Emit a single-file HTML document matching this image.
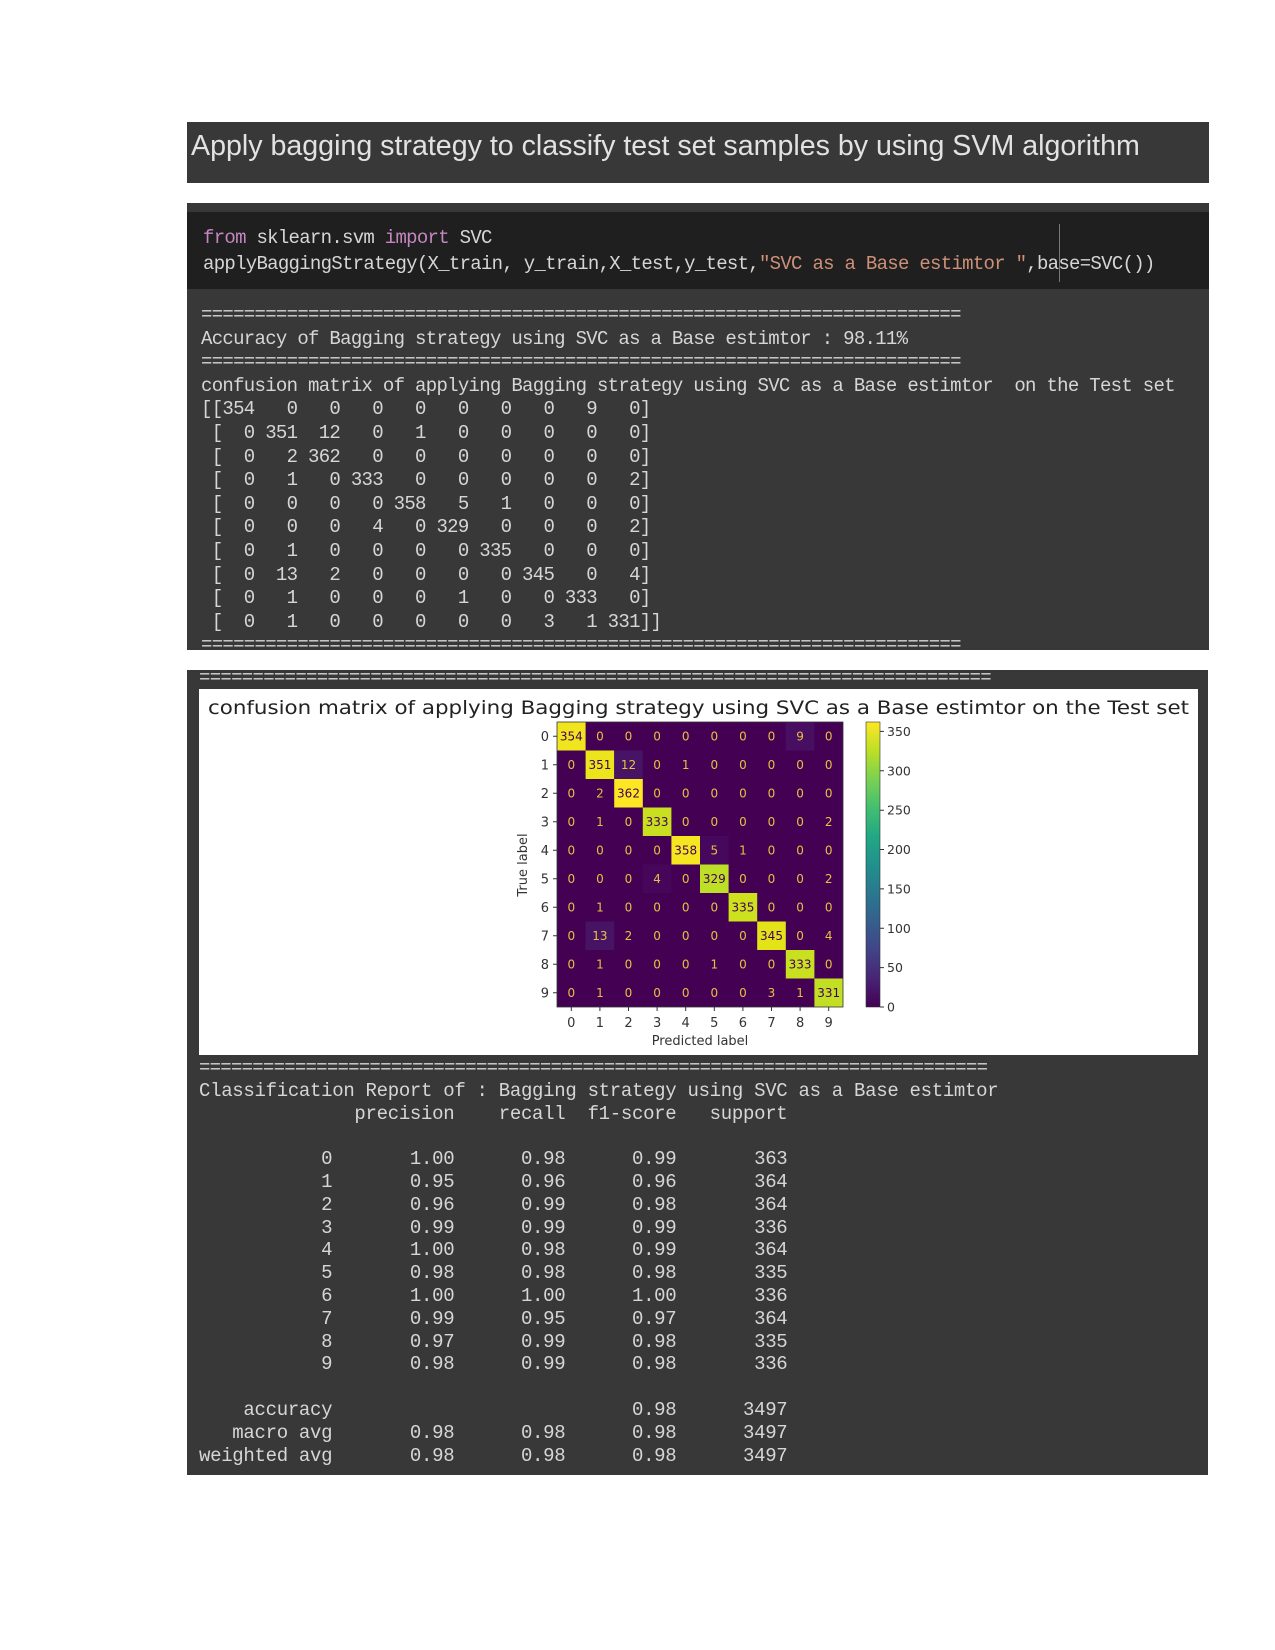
<!DOCTYPE html>
<html><head><meta charset="utf-8"><style>
html,body{margin:0;padding:0;background:#fff;width:1275px;height:1650px;overflow:hidden;position:relative}
.box{position:absolute;background:#383838}
.mono{position:absolute;font-family:"Liberation Mono",monospace;font-size:19px;letter-spacing:-0.7px;white-space:pre;color:#d6d6d6;margin:0}
.k{color:#c586c0}.s{color:#ce9178}
</style></head><body>
<div class="box" style="left:187px;top:122px;width:1022px;height:61px"></div>
<div style="position:absolute;left:191px;top:130px;font-family:'Liberation Sans',sans-serif;font-size:28.6px;color:#e2e2e2;white-space:nowrap;letter-spacing:0px">Apply bagging strategy to classify test set samples by using SVM algorithm</div>

<div class="box" style="left:187px;top:203px;width:1022px;height:447px"></div>
<div style="position:absolute;left:187px;top:212px;width:1022px;height:77px;background:#1f1f1f"></div>
<div style="position:absolute;left:1059px;top:224px;width:1px;height:58px;background:#777"></div>
<pre class="mono" style="left:203px;top:225px;line-height:26px;letter-spacing:-0.71px"><span class="k">from</span> sklearn.svm <span class="k">import</span> SVC
applyBaggingStrategy(X_train, y_train,X_test,y_test,<span class="s">"SVC as a Base estimtor "</span>,base=SVC())</pre>
<pre class="mono" style="left:201px;top:304px;line-height:23.6px">=======================================================================
Accuracy of Bagging strategy using SVC as a Base estimtor : 98.11%
=======================================================================
confusion matrix of applying Bagging strategy using SVC as a Base estimtor  on the Test set
[[354   0   0   0   0   0   0   0   9   0]
 [  0 351  12   0   1   0   0   0   0   0]
 [  0   2 362   0   0   0   0   0   0   0]
 [  0   1   0 333   0   0   0   0   0   2]
 [  0   0   0   0 358   5   1   0   0   0]
 [  0   0   0   4   0 329   0   0   0   2]
 [  0   1   0   0   0   0 335   0   0   0]
 [  0  13   2   0   0   0   0 345   0   4]
 [  0   1   0   0   0   1   0   0 333   0]
 [  0   1   0   0   0   0   0   3   1 331]]
=======================================================================</pre>

<div class="box" style="left:187px;top:670px;width:1021px;height:805px"></div>
<pre class="mono" style="left:199px;top:667px;line-height:23px">==========================================================================</pre>

<svg style="position:absolute;left:0;top:0" width="1275" height="1650" xmlns="http://www.w3.org/2000/svg">
<defs><linearGradient id="vir" x1="0" y1="1" x2="0" y2="0">
<stop offset="0" stop-color="#440154"/><stop offset="0.1" stop-color="#482475"/><stop offset="0.2" stop-color="#414487"/><stop offset="0.3" stop-color="#355f8d"/><stop offset="0.4" stop-color="#2a788e"/><stop offset="0.5" stop-color="#21918c"/><stop offset="0.6" stop-color="#22a884"/><stop offset="0.7" stop-color="#44bf70"/><stop offset="0.8" stop-color="#7ad151"/><stop offset="0.9" stop-color="#bddf26"/><stop offset="1" stop-color="#fde725"/>
</linearGradient></defs>
<rect x="199" y="689" width="999" height="366" fill="#fff"/>
<text x="208" y="714" font-family="DejaVu Sans,sans-serif" font-size="19" fill="#222" textLength="981" lengthAdjust="spacingAndGlyphs">confusion matrix of applying Bagging strategy using SVC as a Base estimtor  on the Test set</text>
<rect x="557" y="722" width="286" height="285" fill="#440154"/>
<g>
<rect x="557" y="722" width="28.6" height="28.5" fill="#f1e51d"/>
<rect x="785.8" y="722" width="28.6" height="28.5" fill="#470e61"/>
<rect x="585.6" y="750.5" width="28.6" height="28.5" fill="#ece51b"/>
<rect x="614.2" y="750.5" width="28.6" height="28.5" fill="#471365"/>
<rect x="614.2" y="779" width="28.6" height="28.5" fill="#fde725"/>
<rect x="642.8" y="807.5" width="28.6" height="28.5" fill="#c8e020"/>
<rect x="671.4" y="836" width="28.6" height="28.5" fill="#f6e620"/>
<rect x="700" y="836" width="28.6" height="28.5" fill="#46085c"/>
<rect x="642.8" y="864.5" width="28.6" height="28.5" fill="#46075a"/>
<rect x="700" y="864.5" width="28.6" height="28.5" fill="#bddf26"/>
<rect x="728.6" y="893" width="28.6" height="28.5" fill="#cde11d"/>
<rect x="585.6" y="921.5" width="28.6" height="28.5" fill="#471365"/>
<rect x="757.2" y="921.5" width="28.6" height="28.5" fill="#e2e418"/>
<rect x="785.8" y="950" width="28.6" height="28.5" fill="#c8e020"/>
<rect x="814.4" y="978.5" width="28.6" height="28.5" fill="#c2df23"/>
</g>
<rect x="557" y="722" width="286" height="285" fill="none" stroke="#333" stroke-width="0.8"/>
<g font-family="DejaVu Sans,sans-serif" font-size="12" text-anchor="middle" fill="#e8c040">
<text y="740.5"><tspan x="571.3" fill="#440154">354</tspan><tspan x="599.9">0</tspan><tspan x="628.5">0</tspan><tspan x="657.1">0</tspan><tspan x="685.7">0</tspan><tspan x="714.3">0</tspan><tspan x="742.9">0</tspan><tspan x="771.5">0</tspan><tspan x="800.1">9</tspan><tspan x="828.7">0</tspan></text>
<text y="769"><tspan x="571.3">0</tspan><tspan x="599.9" fill="#440154">351</tspan><tspan x="628.5">12</tspan><tspan x="657.1">0</tspan><tspan x="685.7">1</tspan><tspan x="714.3">0</tspan><tspan x="742.9">0</tspan><tspan x="771.5">0</tspan><tspan x="800.1">0</tspan><tspan x="828.7">0</tspan></text>
<text y="797.5"><tspan x="571.3">0</tspan><tspan x="599.9">2</tspan><tspan x="628.5" fill="#440154">362</tspan><tspan x="657.1">0</tspan><tspan x="685.7">0</tspan><tspan x="714.3">0</tspan><tspan x="742.9">0</tspan><tspan x="771.5">0</tspan><tspan x="800.1">0</tspan><tspan x="828.7">0</tspan></text>
<text y="826"><tspan x="571.3">0</tspan><tspan x="599.9">1</tspan><tspan x="628.5">0</tspan><tspan x="657.1" fill="#440154">333</tspan><tspan x="685.7">0</tspan><tspan x="714.3">0</tspan><tspan x="742.9">0</tspan><tspan x="771.5">0</tspan><tspan x="800.1">0</tspan><tspan x="828.7">2</tspan></text>
<text y="854.5"><tspan x="571.3">0</tspan><tspan x="599.9">0</tspan><tspan x="628.5">0</tspan><tspan x="657.1">0</tspan><tspan x="685.7" fill="#440154">358</tspan><tspan x="714.3">5</tspan><tspan x="742.9">1</tspan><tspan x="771.5">0</tspan><tspan x="800.1">0</tspan><tspan x="828.7">0</tspan></text>
<text y="883"><tspan x="571.3">0</tspan><tspan x="599.9">0</tspan><tspan x="628.5">0</tspan><tspan x="657.1">4</tspan><tspan x="685.7">0</tspan><tspan x="714.3" fill="#440154">329</tspan><tspan x="742.9">0</tspan><tspan x="771.5">0</tspan><tspan x="800.1">0</tspan><tspan x="828.7">2</tspan></text>
<text y="911.5"><tspan x="571.3">0</tspan><tspan x="599.9">1</tspan><tspan x="628.5">0</tspan><tspan x="657.1">0</tspan><tspan x="685.7">0</tspan><tspan x="714.3">0</tspan><tspan x="742.9" fill="#440154">335</tspan><tspan x="771.5">0</tspan><tspan x="800.1">0</tspan><tspan x="828.7">0</tspan></text>
<text y="940"><tspan x="571.3">0</tspan><tspan x="599.9">13</tspan><tspan x="628.5">2</tspan><tspan x="657.1">0</tspan><tspan x="685.7">0</tspan><tspan x="714.3">0</tspan><tspan x="742.9">0</tspan><tspan x="771.5" fill="#440154">345</tspan><tspan x="800.1">0</tspan><tspan x="828.7">4</tspan></text>
<text y="968.5"><tspan x="571.3">0</tspan><tspan x="599.9">1</tspan><tspan x="628.5">0</tspan><tspan x="657.1">0</tspan><tspan x="685.7">0</tspan><tspan x="714.3">1</tspan><tspan x="742.9">0</tspan><tspan x="771.5">0</tspan><tspan x="800.1" fill="#440154">333</tspan><tspan x="828.7">0</tspan></text>
<text y="997"><tspan x="571.3">0</tspan><tspan x="599.9">1</tspan><tspan x="628.5">0</tspan><tspan x="657.1">0</tspan><tspan x="685.7">0</tspan><tspan x="714.3">0</tspan><tspan x="742.9">0</tspan><tspan x="771.5">3</tspan><tspan x="800.1">1</tspan><tspan x="828.7" fill="#440154">331</tspan></text>
</g>
<g font-family="DejaVu Sans,sans-serif" font-size="13" fill="#333" text-anchor="end">
<text x="549" y="741">0</text><text x="549" y="769.5">1</text><text x="549" y="798">2</text><text x="549" y="826.5">3</text><text x="549" y="855">4</text><text x="549" y="883.5">5</text><text x="549" y="912">6</text><text x="549" y="940.5">7</text><text x="549" y="969">8</text><text x="549" y="997.5">9</text>
</g>
<g stroke="#333" stroke-width="1">
<path d="M553 736.3h4M553 764.8h4M553 793.3h4M553 821.8h4M553 850.3h4M553 878.8h4M553 907.3h4M553 935.8h4M553 964.3h4M553 992.8h4"/>
<path d="M571.3 1007v4M599.9 1007v4M628.5 1007v4M657.1 1007v4M685.7 1007v4M714.3 1007v4M742.9 1007v4M771.5 1007v4M800.1 1007v4M828.7 1007v4"/>
<path d="M880 1007h4M880 967.6h4M880 928.3h4M880 888.9h4M880 849.5h4M880 810.2h4M880 770.8h4M880 731.4h4"/>
</g>
<g font-family="DejaVu Sans,sans-serif" font-size="13" fill="#333" text-anchor="middle">
<text x="571.3" y="1027">0</text><text x="599.9" y="1027">1</text><text x="628.5" y="1027">2</text><text x="657.1" y="1027">3</text><text x="685.7" y="1027">4</text><text x="714.3" y="1027">5</text><text x="742.9" y="1027">6</text><text x="771.5" y="1027">7</text><text x="800.1" y="1027">8</text><text x="828.7" y="1027">9</text>
<text x="700" y="1045">Predicted label</text>
<text x="0" y="0" transform="translate(527 865) rotate(-90)">True label</text>
</g>
<rect x="866" y="722" width="14" height="285" fill="url(#vir)" stroke="#333" stroke-width="0.6"/>
<g font-family="DejaVu Sans,sans-serif" font-size="12.5" fill="#333">
<text x="887" y="1011.5">0</text><text x="887" y="972">50</text><text x="887" y="932.8">100</text><text x="887" y="893.4">150</text><text x="887" y="854">200</text><text x="887" y="814.7">250</text><text x="887" y="775.3">300</text><text x="887" y="735.9">350</text>
</g>
</svg>

<pre class="mono" style="left:199px;top:1057px;line-height:22.8px;letter-spacing:-0.75px">==========================================================================</pre>
<pre class="mono" style="left:199px;top:1079.8px;line-height:22.8px;letter-spacing:-0.3px">Classification Report of : Bagging strategy using SVC as a Base estimtor
              precision    recall  f1-score   support

           0       1.00      0.98      0.99       363
           1       0.95      0.96      0.96       364
           2       0.96      0.99      0.98       364
           3       0.99      0.99      0.99       336
           4       1.00      0.98      0.99       364
           5       0.98      0.98      0.98       335
           6       1.00      1.00      1.00       336
           7       0.99      0.95      0.97       364
           8       0.97      0.99      0.98       335
           9       0.98      0.99      0.98       336

    accuracy                           0.98      3497
   macro avg       0.98      0.98      0.98      3497
weighted avg       0.98      0.98      0.98      3497</pre>
</body></html>
